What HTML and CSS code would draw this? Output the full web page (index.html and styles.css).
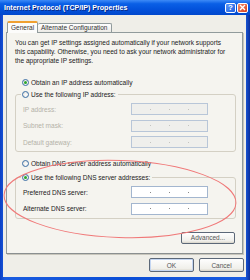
FILE: index.html
```html
<!DOCTYPE html>
<html lang="en">
<head>
    <meta charset="UTF-8">
    <title>Internet Protocol (TCP/IP) Properties</title>
    <link rel="stylesheet" href="styles.css">
</head>
<body>
<div class="window">
    <div class="titlebar">
        <span class="title">Internet Protocol (TCP/IP) Properties</span>
        <div class="caption-buttons">
            <span class="cap-btn help">?</span>
            <span class="cap-btn close">
                <svg width="7" height="7" viewBox="0 0 7 7"><path d="M1 1 L6 6 M6 1 L1 6" stroke="#fff" stroke-width="1.4"/></svg>
            </span>
        </div>
    </div>

    <div class="client">
        <div class="tabs">
            <div class="tab active">General</div>
            <div class="tab">Alternate Configuration</div>
        </div>

        <div class="panel">
            <p class="intro">
                You can get IP settings assigned automatically if your network supports<br>
                this capability. Otherwise, you need to ask your network administrator for<br>
                the appropriate IP settings.
            </p>

            <div class="option first"><span class="radio checked"></span>Obtain an IP address automatically</div>

            <fieldset class="group">
                <legend class="option"><span class="radio"></span>Use the following IP address:</legend>
                <div class="field disabled">
                    <span class="field-label">IP address:</span>
                    <span class="ipbox"><i></i><b></b><i></i><b></b><i></i><b></b><i></i></span>
                </div>
                <div class="field disabled">
                    <span class="field-label">Subnet mask:</span>
                    <span class="ipbox"><i></i><b></b><i></i><b></b><i></i><b></b><i></i></span>
                </div>
                <div class="field disabled">
                    <span class="field-label">Default gateway:</span>
                    <span class="ipbox"><i></i><b></b><i></i><b></b><i></i><b></b><i></i></span>
                </div>
            </fieldset>

            <div class="option dns-auto"><span class="radio"></span>Obtain DNS server address automatically</div>

            <fieldset class="group dns">
                <legend class="option"><span class="radio checked"></span>Use the following DNS server addresses:</legend>
                <div class="field">
                    <span class="field-label">Preferred DNS server:</span>
                    <span class="ipbox"><i></i><b></b><i></i><b></b><i></i><b></b><i></i></span>
                </div>
                <div class="field">
                    <span class="field-label">Alternate DNS server:</span>
                    <span class="ipbox"><i></i><b></b><i></i><b></b><i></i><b></b><i></i></span>
                </div>
            </fieldset>

            <div class="advanced-row">
                <button class="btn advanced">Advanced...</button>
            </div>
        </div>

        <div class="dialog-buttons">
            <button class="btn default">OK</button>
            <button class="btn">Cancel</button>
        </div>
    </div>

    <!-- hand drawn mark over the DNS section -->
    <svg class="annotation" width="250" height="280" viewBox="0 0 250 280">
        <ellipse cx="120" cy="199" rx="116" ry="38.5" transform="rotate(2 120 199)"
                 fill="none" stroke="#f07878" stroke-width="1"/>
    </svg>
</div>
</body>
</html>
```

FILE: styles.css
```css
* {
    box-sizing: border-box;
}

body {
    margin: 0;
    font-family: 'Liberation Sans', Arial, sans-serif;
    font-size: 6.55px;
    color: #222;
}

.window {
    position: relative;
    width: 250px;
    height: 280px;
    display: flex;
    flex-direction: column;
    padding: 0 4px 3px 3px;
    background: linear-gradient(90deg, #0b3fc4, #1a5ce0 2%, #0a4ed6 50%, #1a5ce0 98%, #0b2f9c);
}

.titlebar {
    height: 15px;
    margin: 0 -4px 0 -3px;
    padding: 0 2px 0 4px;
    display: flex;
    align-items: center;
    justify-content: space-between;
    background: linear-gradient(#3d8af7 0, #0a5fe6 25%, #0352dc 60%, #0048cc 100%);
}

.title {
    color: #fff;
    font-weight: bold;
    font-size: 7.1px;
    text-shadow: 1px 1px 0 #0a2a86;
}

.caption-buttons {
    display: flex;
    gap: 1px;
}

.cap-btn {
    width: 11px;
    height: 10px;
    border: 1px solid #fff;
    border-radius: 2px;
    display: flex;
    align-items: center;
    justify-content: center;
    color: #fff;
    font-weight: bold;
    font-size: 8px;
}

.help {
    background: linear-gradient(135deg, #5c96f8, #1f5fe0);
}

.close {
    background: linear-gradient(135deg, #f08a6c, #d8401c);
}

.client {
    flex: 1;
    display: flex;
    flex-direction: column;
    padding: 6px 3px 0 3px;
    background: #efeee8;
}

.tabs {
    display: flex;
    align-items: flex-end;
    padding-left: 1px;
    position: relative;
    z-index: 1;
}

.tab {
    height: 9px;
    padding: 0 3px;
    border: 1px solid #919b9c;
    border-bottom: none;
    border-left: none;
    border-radius: 2px 2px 0 0;
    background: linear-gradient(#fff, #ecebe6);
    font-size: 6.5px;
    line-height: 8px;
    color: #333;
}

.tab.active {
    height: 12px;
    width: 31px;
    margin-bottom: -1px;
    border-left: 1px solid #919b9c;
    border-top: 2px solid #f0a030;
    background: #fcfcfb;
    text-align: center;
    line-height: 9px;
}

.panel {
    height: 222px;
    padding: 0 6px 0 8px;
    border: 1px solid #919b9c;
    border-bottom-color: #8a8f90;
    box-shadow: 1px 1px 0 #c8c6bc;
    background: #f5f4ef;
}

.intro {
    margin: 5px 0 0;
    line-height: 9px;
    white-space: nowrap;
}

.option {
    display: flex;
    align-items: center;
    height: 9px;
    padding-left: 7px;
    gap: 2px;
}

.option.first {
    margin-top: 13px;
}

.option.dns-auto {
    margin-top: 7px;
}

.radio {
    width: 7px;
    height: 7px;
    border: 1px solid #3a6ea5;
    border-radius: 50%;
    background: radial-gradient(circle at 60% 60%, #fff, #dcdcd6);
    display: flex;
    align-items: center;
    justify-content: center;
}

.radio.checked::after {
    content: '';
    width: 3px;
    height: 3px;
    border-radius: 50%;
    background: #2aa62a;
}

.group {
    margin: 3px 0 0;
    padding: 4px 0 3px 7px;
    border: 1px solid #d4d0c4;
    border-radius: 3px;
    min-width: 0;
}

.group legend.option {
    padding: 0 2px 0 1px;
    margin-left: -2px;
}

.group.dns {
    margin-top: 5px;
}

.field {
    display: flex;
    align-items: center;
    height: 12px;
    margin-bottom: 4.5px;
}

.field:last-child {
    margin-bottom: 0;
}

.field-label {
    width: 108px;
}

.disabled .field-label {
    color: #b4b2a8;
}

.ipbox {
    width: 77px;
    height: 12px;
    border: 1px solid #a3b6cf;
    background: #fff;
    display: flex;
    align-items: center;
}

.ipbox i {
    flex: 1;
}

.ipbox b {
    width: 1px;
    height: 1px;
    background: #8a8a8a;
}

.disabled .ipbox {
    background: #efefec;
    border-color: #b8c6d8;
}

.disabled .ipbox b {
    background: #c4c4c0;
}

.advanced-row {
    display: flex;
    justify-content: flex-end;
    margin-top: 13px;
    padding-right: 1px;
}

.btn {
    height: 14px;
    width: 45px;
    padding: 0;
    border: 1px solid #5c6878;
    border-radius: 2px;
    background: linear-gradient(#fefefe, #f0efea 80%, #d8d4c8);
    font-family: inherit;
    font-size: 6.5px;
    color: #555;
}

.btn.advanced {
    width: 54px;
    height: 12px;
}

.btn.default {
    box-shadow: inset 0 0 0 1px #c4d6f2;
}

.dialog-buttons {
    display: flex;
    justify-content: flex-end;
    gap: 5px;
    margin: 4px -1px 0 0;
}

.annotation {
    position: absolute;
    left: 0;
    top: 0;
    pointer-events: none;
}
```
